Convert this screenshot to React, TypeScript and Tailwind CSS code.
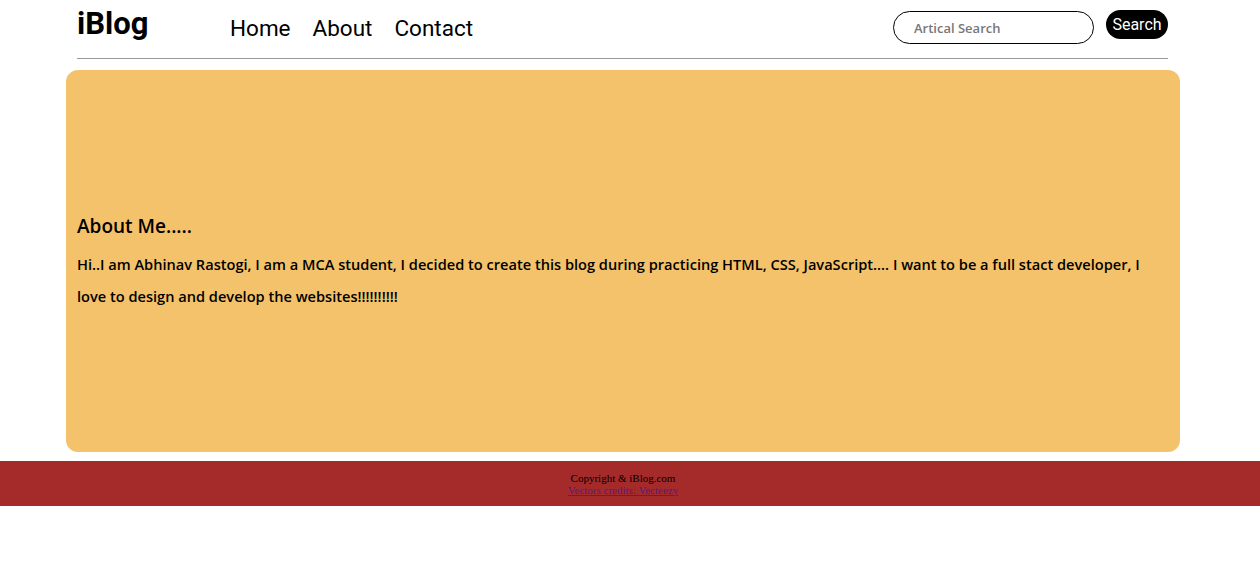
export default function App() {
  return (
    <div className="min-h-[565px] bg-white">
      <header className="ml-[77px] flex h-[59px] w-[1091px] items-center border-b border-[#999]">
        <div className="w-[153px] pb-[12px] font-['Roboto',sans-serif] text-[31px] font-bold leading-none text-black">iBlog</div>
        <nav className="flex items-center gap-[22px] pb-[1px] font-['Roboto',sans-serif] text-[22.5px] text-black">
          <a href="#">Home</a>
          <a href="#">About</a>
          <a href="#">Contact</a>
        </nav>
        <div className="ml-auto flex items-center gap-3 pb-[5px]">
          <input
            placeholder="Artical Search"
            className="h-[33px] w-[201px] translate-y-[1px] rounded-full border border-black px-5 font-['Open_Sans',sans-serif] text-[13px] font-semibold placeholder:text-[#777] outline-none"
          />
          <button className="h-[29px] w-[62px] -translate-y-[2px] rounded-full bg-black font-['Roboto',sans-serif] text-[16px] text-white">Search</button>
        </div>
      </header>
      <main className="ml-[66px] mt-[11px] flex h-[382px] w-[1114px] flex-col justify-center rounded-xl bg-[#f4c26a] px-[11px] pt-[2px] font-['Open_Sans',sans-serif] text-black">
        <h2 className="text-[19px] font-semibold">About Me.....</h2>
        <p className="mt-[8px] text-[14.6px] font-semibold leading-[32px]">
          Hi..I am Abhinav Rastogi, I am a MCA student, I decided to create this blog during practicing HTML, CSS, JavaScript.... I want to be a full stact developer, I love to design and develop the websites!!!!!!!!!!
        </p>
      </main>
      <footer className="mt-[9px] flex h-[45px] flex-col items-center justify-center bg-[#a52a2a] pr-[14px] font-['Liberation_Serif',serif] text-[11px] leading-[12px]">
        <p className="text-black">Copyright &amp; iBlog.com</p>
        <a href="#" className="text-[#551a8b] underline">Vectors credits: Vecteezy</a>
      </footer>
    </div>
  )
}
